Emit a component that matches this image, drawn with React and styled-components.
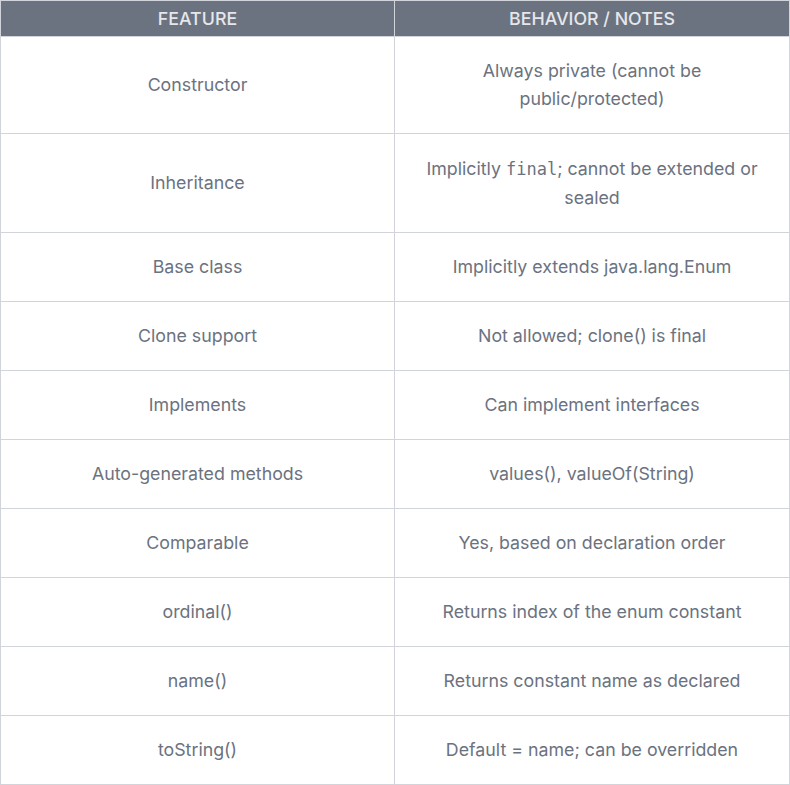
import React from 'react';
import styled, { createGlobalStyle } from 'styled-components';

const GlobalStyle = createGlobalStyle`
  body {
    margin: 0;
    background: #fff;
    font-family: Inter, "Noto Sans", sans-serif;
  }
`;

const Table = styled.table`
  width: 790px;
  border-collapse: collapse;
  border: 1px solid #d1d5db;
  font-size: 17.8px;
  color: #6b7280;
  table-layout: fixed;
`;

const HeadCell = styled.th`
  background-color: #6b7280;
  color: #e5e7eb;
  font-weight: 500;
  text-transform: uppercase;
  padding: 7px 16px;
  line-height: 21px;
  border: 1px solid #d1d5db;
  text-align: center;

  &:first-child {
    width: 361px;
  }
`;

const Cell = styled.td`
  padding: 20px 24px;
  line-height: 28px;
  border: 1px solid #d1d5db;
  text-align: center;
  vertical-align: middle;
`;

const Code = styled.code`
  font-family: "DejaVu Sans Mono", monospace;
  font-size: 17px;
  line-height: 30px;
`;

const rows = [
  ['Constructor', 'Always private (cannot be public/protected)'],
  ['Inheritance', <>Implicitly <Code>final</Code>; cannot be extended or sealed</>],
  ['Base class', 'Implicitly extends java.lang.Enum'],
  ['Clone support', 'Not allowed; clone() is final'],
  ['Implements', 'Can implement interfaces'],
  ['Auto-generated methods', 'values(), valueOf(String)'],
  ['Comparable', 'Yes, based on declaration order'],
  ['ordinal()', 'Returns index of the enum constant'],
  ['name()', 'Returns constant name as declared'],
  ['toString()', 'Default = name; can be overridden'],
];

const App = () => (
  <>
    <GlobalStyle />
    <Table>
      <thead>
        <tr>
          <HeadCell>Feature</HeadCell>
          <HeadCell>Behavior / Notes</HeadCell>
        </tr>
      </thead>
      <tbody>
        {rows.map(([feature, note], index) => (
          <tr key={index}>
            <Cell>{feature}</Cell>
            <Cell>{note}</Cell>
          </tr>
        ))}
      </tbody>
    </Table>
  </>
);

export default App;
